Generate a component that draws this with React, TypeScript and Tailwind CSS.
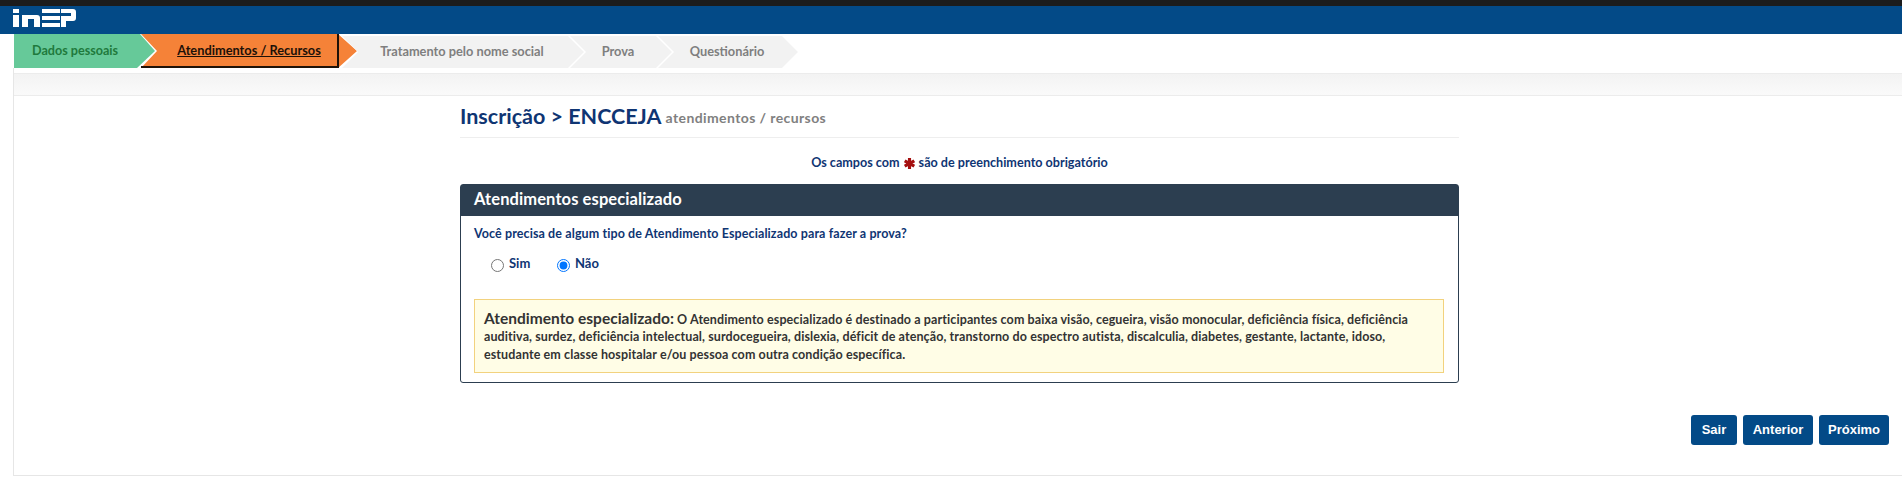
import React, { useState } from 'react';

const font = "font-['Lato','Open_Sans',sans-serif]";

const Logo = () => (
  <svg width="63" height="18" viewBox="0 0 63 18" fill="#fff">
    <rect x="0" y="0" width="6" height="4" />
    <rect x="0" y="6" width="6" height="12" />
    <path d="M9 6h15a3 3 0 0 1 3 3v9h-6v-8h-6v8H9z" />
    <path d="M29 0h18v4H29z" />
    <path d="M29 7h18v4H29z" />
    <path d="M29 14h18v4H29z" />
    <path d="M48 0h12a3 3 0 0 1 3 3v6a3 3 0 0 1-3 3h-7v6h-5V7h10V4H48z" />
  </svg>
);

const steps = [
  { label: 'Tratamento pelo nome social', w: 'w-[242px]', pad: 'pr-[14px]' },
  { label: 'Prova', w: 'w-[102px]', pad: 'pr-[18px]' },
  { label: 'Questionário', w: 'w-[140px]', pad: 'pr-[14px]' },
];

const Stepper = () => (
  <div className="flex h-[34px] pl-[14px]">
    <div className="flex h-full w-[141px] items-center pl-[18px] bg-[#66c999] [clip-path:polygon(0_0,126px_0,100%_50%,123px_100%,0_100%)]">
      <span className="text-[12.6px] font-bold text-[#1f7a3d]">Dados pessoais</span>
    </div>
    <div className="relative -ml-[14px] h-full w-[216px]">
      <div className="flex h-full items-center justify-center bg-[#f58238] pl-[18px] pr-[18px] [clip-path:polygon(0_0,197px_0,100%_50%,197px_100%,0_100%,16px_50%)]">
        <a href="#" className="text-[12.8px] font-bold text-[#1d1108] underline">Atendimentos / Recursos</a>
      </div>
      <div className="absolute bottom-0 left-0 h-[2px] w-[197px] bg-[#1f1208]" />
      <div className="absolute right-[18px] top-0 h-[34px] w-[2px] bg-[#1f1208]" />
    </div>
    {steps.map((s, i) => (
      <div
        key={s.label}
        className={`${s.w} ${s.pad} ${i === 0 ? '-ml-[15px]' : '-ml-[14px]'} mt-[2px] flex h-[32px] items-center justify-center bg-[#f2f2f2] pl-[12px] [clip-path:polygon(0_0,calc(100%-16px)_0,100%_50%,calc(100%-16px)_100%,0_100%,16px_50%)]`}
      >
        <span className="text-[12.8px] font-bold text-[#7f7f7f]">{s.label}</span>
      </div>
    ))}
  </div>
);

export default function App() {
  const [need, setNeed] = useState('nao');

  return (
    <div className={`${font} h-[477px] overflow-hidden bg-white`}>
      <div className="h-[6px] bg-[#1c1c1c]" />
      <header className="flex h-[28px] items-start bg-[#034a87] pl-[13px] pt-[3px]">
        <Logo />
      </header>
      <Stepper />

      <div className="ml-[13px] h-[408px] border-b border-l border-[#e6e6e6] pt-[5px]">
        <div className="h-[23px] border-y border-[#ececec] bg-gradient-to-b from-[#f3f3f3] to-[#fafafa]" />

        <main className="ml-[446px] w-[999px]">
          <div className="flex h-[42px] items-center gap-[4px] border-b border-[#eeeeee] pb-[1px]">
            <h1 className="text-[21.5px] font-bold text-[#0f3573]">Inscrição &gt; ENCCEJA</h1>
            <small className="mt-[3px] text-[14px] font-bold tracking-[0.4px] text-[#808080]">atendimentos / recursos</small>
          </div>

          <p className="mt-[17px] flex h-[16px] items-center justify-center gap-[4px] text-[12.6px] font-bold text-[#0f3573]">
            Os campos com
            <svg width="11" height="11" viewBox="0 0 12 12" stroke="#a50f0f" strokeWidth="3.4">
              <path d="M6 0v12M0.8 3l10.4 6M11.2 3L0.8 9" />
            </svg>
            são de preenchimento obrigatório
          </p>

          <section className="mt-[13px] h-[199px] rounded-[3px] border border-[#2c3e50]">
            <div className="flex h-[31px] items-center bg-[#2c3e50] pb-[2px] pl-[13px] text-[16.5px] font-bold tracking-[0.1px] text-white">
              Atendimentos especializado
            </div>
            <div className="px-[13px]">
              <p className="mt-[9px] text-[12.5px] font-bold tracking-[0.1px] text-[#0f3573]">
                Você precisa de algum tipo de Atendimento Especializado para fazer a prova?
              </p>
              <div className="mt-[11px] flex h-[18px] items-center pl-[17px] text-[13px] font-bold text-[#0f3573]">
                <label className="flex w-[66px] items-center gap-[5px]">
                  <input type="radio" name="need" checked={need === 'sim'} onChange={() => setNeed('sim')} className="m-0 mt-[3px] h-[13px] w-[13px] accent-[#0075ff]" />
                  Sim
                </label>
                <label className="flex items-center gap-[5px]">
                  <input type="radio" name="need" checked={need === 'nao'} onChange={() => setNeed('nao')} className="m-0 mt-[3px] h-[13px] w-[13px] accent-[#0075ff]" />
                  Não
                </label>
              </div>
              <div className="mt-[26px] h-[74px] w-[970px] border border-[#f2d27e] bg-[#fffde6] px-[9px] pt-[11px] text-[12.5px] font-bold leading-[17.5px] tracking-[0.1px] text-[#333333]">
                <strong className="text-[15.5px] font-bold leading-none tracking-normal">Atendimento especializado:</strong>{' '}
                O Atendimento especializado é destinado a participantes com baixa visão, cegueira, visão monocular, deficiência física, deficiência<br />
                auditiva, surdez, deficiência intelectual, surdocegueira, dislexia, déficit de atenção, transtorno do espectro autista, discalculia, diabetes, gestante, lactante, idoso,<br />
                estudante em classe hospitalar e/ou pessoa com outra condição específica.
              </div>
            </div>
          </section>
        </main>

        <div className="mt-[32px] flex justify-end gap-[6px] pr-[13px] font-['Liberation_Sans',sans-serif] text-[13px] font-bold text-white">
          <button className="h-[30px] w-[46px] rounded-[3px] bg-[#034a87]">Sair</button>
          <button className="h-[30px] w-[70px] rounded-[3px] bg-[#034a87]">Anterior</button>
          <button className="h-[30px] w-[70px] rounded-[3px] bg-[#034a87]">Próximo</button>
        </div>
      </div>
    </div>
  );
}
